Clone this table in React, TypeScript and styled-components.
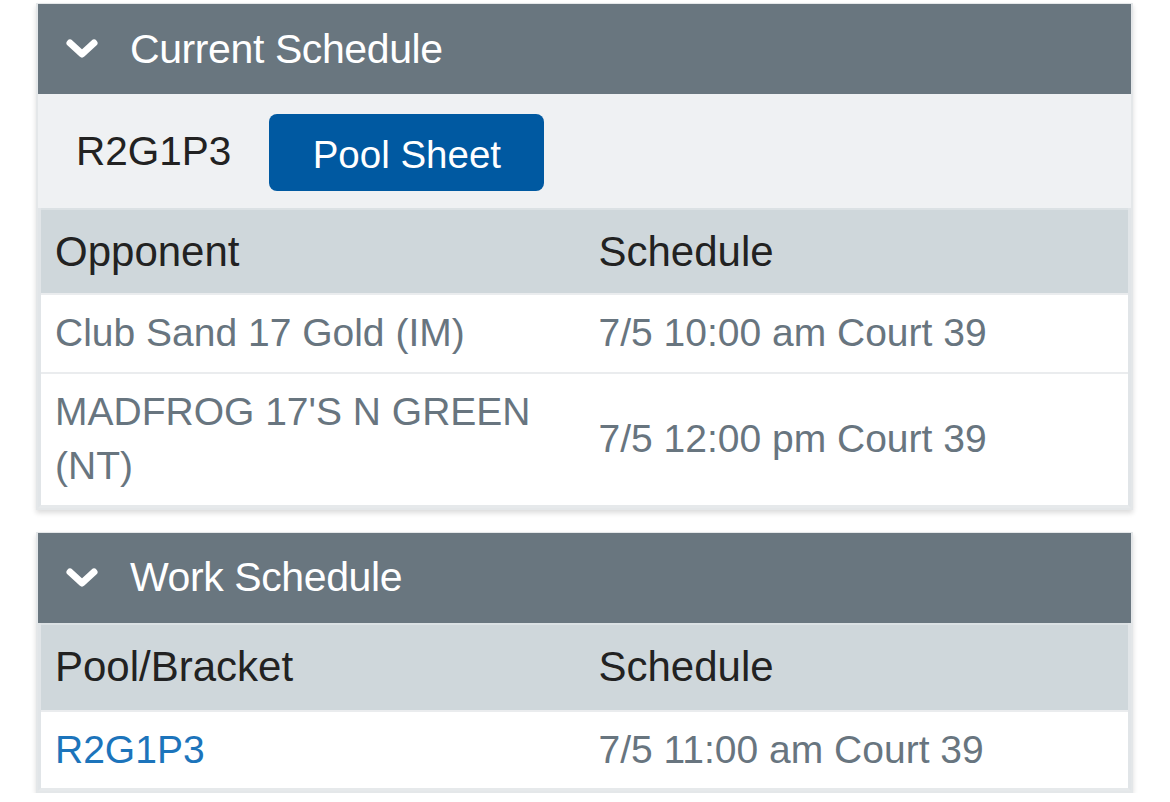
import React from "react";
import styled, { createGlobalStyle } from "styled-components";

const Global = createGlobalStyle`
  html, body { margin: 0; padding: 0; background: #ffffff; }
  body { font-family: "Liberation Sans", Arial, Helvetica, sans-serif; }
`;

const Page = styled.div`
  width: 1097px;
  padding: 3px 0 0 36px;
  display: flex;
  flex-direction: column;
  gap: 22px;
`;

const Panel = styled.section`
  border: 2px solid #e4e7e9;
  border-top-width: 1px;
  background: #ffffff;
  box-shadow: 0 3px 5px rgba(0, 0, 0, 0.14);
`;

const PanelHeader = styled.div`
  height: 90px;
  background: #69767f;
  display: flex;
  align-items: center;
  padding-left: 27px;
  gap: 31px;
`;

const Chevron = styled.svg`
  width: 34px;
  height: 22px;
  flex: none;
`;

const PanelTitle = styled.h2`
  margin: 0;
  font-size: 41px;
  font-weight: 400;
  color: #ffffff;
  letter-spacing: -0.4px;
`;

const Toolbar = styled.div`
  height: 114px;
  background: #eff1f3;
  display: flex;
  align-items: center;
  padding-left: 38px;
  gap: 38px;
`;

const PoolLabel = styled.span`
  font-size: 40.5px;
  color: #222222;
`;

const Button = styled.button`
  width: 275px;
  height: 77px;
  margin-top: 2px;
  border: none;
  border-radius: 8px;
  background: #0059a1;
  color: #ffffff;
  font-family: inherit;
  font-size: 38.5px;
  padding: 6px 0 0;
`;

const TableWrap = styled.div`
  border-left: 3px solid #e1e5e8;
  border-right: 3px solid #e1e5e8;
  border-bottom: 3px solid #e6e9eb;
  background: #eff1f3;
`;

const Table = styled.table`
  width: 100%;
  border-collapse: collapse;
  table-layout: fixed;
  background: #ffffff;
`;

const HeadCell = styled.th<{ $tall?: boolean }>`
  width: 50%;
  height: ${(p) => (p.$tall ? "85px" : "83px")};
  padding: 0 14px;
  background: #cfd7db;
  border-top: 2px solid #dbe1e4;
  text-align: left;
  font-weight: 400;
  font-size: 42px;
  color: #222222;
`;

const Cell = styled.td<{ $link?: boolean }>`
  padding: 11px 14px;
  border-top: 2px solid #eaecee;
  font-size: 39px;
  line-height: 54.5px;
  color: ${(p) => (p.$link ? "#1c74bb" : "#68757f")};
  vertical-align: middle;
`;

const ChevronIcon = () => (
  <Chevron viewBox="0 0 34 22">
    <path
      d="M5 5 L17 16 L29 5"
      fill="none"
      stroke="#ffffff"
      strokeWidth="7"
      strokeLinecap="round"
      strokeLinejoin="round"
    />
  </Chevron>
);

type Row = { left: string; right: string; link?: boolean };

const ScheduleTable = ({
  cols,
  rows,
  tall,
}: {
  cols: [string, string];
  rows: Row[];
  tall?: boolean;
}) => (
  <TableWrap>
    <Table>
      <thead>
        <tr>
          <HeadCell $tall={tall}>{cols[0]}</HeadCell>
          <HeadCell $tall={tall}>{cols[1]}</HeadCell>
        </tr>
      </thead>
      <tbody>
        {rows.map((r, i) => (
          <tr key={i}>
            <Cell $link={r.link}>{r.left}</Cell>
            <Cell>{r.right}</Cell>
          </tr>
        ))}
      </tbody>
    </Table>
  </TableWrap>
);

export default function App() {
  return (
    <>
      <Global />
      <Page>
        <Panel>
          <PanelHeader>
            <ChevronIcon />
            <PanelTitle>Current Schedule</PanelTitle>
          </PanelHeader>
          <Toolbar>
            <PoolLabel>R2G1P3</PoolLabel>
            <Button>Pool Sheet</Button>
          </Toolbar>
          <ScheduleTable
            cols={["Opponent", "Schedule"]}
            rows={[
              { left: "Club Sand 17 Gold (IM)", right: "7/5 10:00 am Court 39" },
              { left: "MADFROG 17'S N GREEN (NT)", right: "7/5 12:00 pm Court 39" },
            ]}
          />
        </Panel>
        <Panel>
          <PanelHeader>
            <ChevronIcon />
            <PanelTitle>Work Schedule</PanelTitle>
          </PanelHeader>
          <ScheduleTable
            tall
            cols={["Pool/Bracket", "Schedule"]}
            rows={[{ left: "R2G1P3", right: "7/5 11:00 am Court 39", link: true }]}
          />
        </Panel>
      </Page>
    </>
  );
}
